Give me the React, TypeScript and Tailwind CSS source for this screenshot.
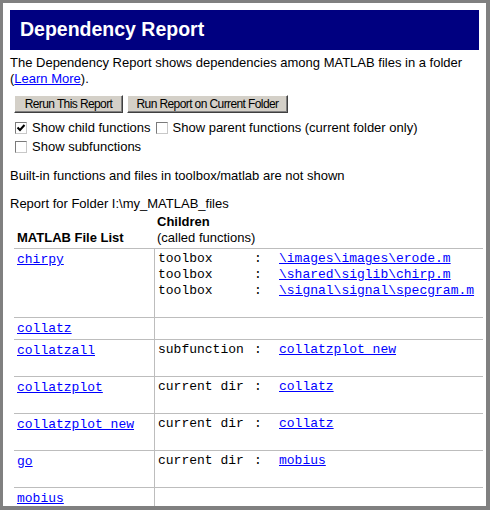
const sans = "font-['Liberation_Sans',Arial,sans-serif]"
const mono = "font-['Liberation_Mono','Courier_New',monospace]"

type Child = { kind: string; target: string }
type Row = { name: string; children: Child[] }

const rows: Row[] = [
  {
    name: 'chirpy',
    children: [
      { kind: 'toolbox', target: '\\images\\images\\erode.m' },
      { kind: 'toolbox', target: '\\shared\\siglib\\chirp.m' },
      { kind: 'toolbox', target: '\\signal\\signal\\specgram.m' },
    ],
  },
  { name: 'collatz', children: [] },
  { name: 'collatzall', children: [{ kind: 'subfunction', target: 'collatzplot new' }] },
  { name: 'collatzplot', children: [{ kind: 'current dir', target: 'collatz' }] },
  { name: 'collatzplot new', children: [{ kind: 'current dir', target: 'collatz' }] },
  { name: 'go', children: [{ kind: 'current dir', target: 'mobius' }] },
  { name: 'mobius', children: [] },
]

function ClassicButton({ label, width }: { label: string; width: string }) {
  return (
    <button
      className={`${width} h-[18px] flex items-center justify-center bg-[#d4d0c8] border border-t-white border-l-white border-r-[#404040] border-b-[#404040] shadow-[inset_-1px_-1px_0_#808080] text-[12px] tracking-[-0.6px] text-black leading-none`}
    >
      {label}
    </button>
  )
}

function CheckBox({ checked, label }: { checked?: boolean; label: string }) {
  return (
    <label className="flex items-center">
      <span className="mx-[5px] w-[12px] h-[12px] bg-white border border-t-[#7a7a7a] border-l-[#7a7a7a] border-r-[#c8c8c8] border-b-[#c8c8c8] flex items-center justify-center">
        {checked && (
          <svg width="10" height="10" viewBox="0 0 10 10">
            <path d="M1.5 4.5 L4 7 L8.5 2" fill="none" stroke="#000" strokeWidth="2" />
          </svg>
        )}
      </span>
      <span>{label}</span>
    </label>
  )
}

export default function App() {
  return (
    <div className={`w-[490px] h-[510px] bg-[#808080] pl-[3px] pt-[3px] pr-[4px] pb-[4px] ${sans}`}>
      <div className="w-full h-full bg-white overflow-hidden px-[7px] pt-[7px] text-[13px] text-black">
        {/* Title bar */}
        <div className="h-[40px] bg-[#000080] flex items-center pl-[10px]">
          <h1 className="text-white font-bold text-[19.5px] leading-none">Dependency Report</h1>
        </div>

        <p className="mt-[5px] leading-[16px]">
          The Dependency Report shows dependencies among MATLAB files in a folder (
          <a className="text-[#0000ff] underline">Learn More</a>).
        </p>

        <div className="mt-[8px] ml-[4px] flex gap-[4px]">
          <ClassicButton label="Rerun This Report" width="w-[109px]" />
          <ClassicButton label="Run Report on Current Folder" width="w-[161px]" />
        </div>

        <div className="mt-[5px]">
          <div className="h-[19px] flex items-center">
            <CheckBox checked label="Show child functions" />
            <CheckBox label="Show parent functions (current folder only)" />
          </div>
          <div className="h-[19px] flex items-center">
            <CheckBox label="Show subfunctions" />
          </div>
        </div>

        <p className="mt-[12px] leading-[16px]">Built-in functions and files in toolbox/matlab are not shown</p>

        <p className="mt-[12px] leading-[16px]">Report for Folder I:\my_MATLAB_files</p>

        {/* File table */}
        <div className="ml-[4px] w-[469px] grid grid-cols-[140px_329px] leading-[16px]">
          <div className="pl-[3px] py-[2px] flex items-end font-bold">MATLAB File List</div>
          <div className="pl-[3px] py-[2px]">
            <div className="font-bold">Children</div>
            <div>(called functions)</div>
          </div>

          {rows.map((row) => (
            <div key={row.name} className="contents">
              <div className="border-t border-[#bdbdbd] pl-[3px] py-[2px]">
                <a className={`${mono} text-[#0000ff] underline whitespace-pre`}>{row.name}</a>
              </div>
              <div className="border-t border-l border-[#bdbdbd] pl-[3px] py-[2px]">
                {row.children.map((child, i) => (
                  <div key={i} className={`${mono} flex whitespace-pre`}>
                    <span className="w-[96px]">{child.kind}</span>
                    <span className="w-[25px]">:</span>
                    <a className="text-[#0000ff] underline">{child.target}</a>
                  </div>
                ))}
                {row.children.length > 0 && <div className="h-[16px]" />}
              </div>
            </div>
          ))}
        </div>
      </div>
    </div>
  )
}
